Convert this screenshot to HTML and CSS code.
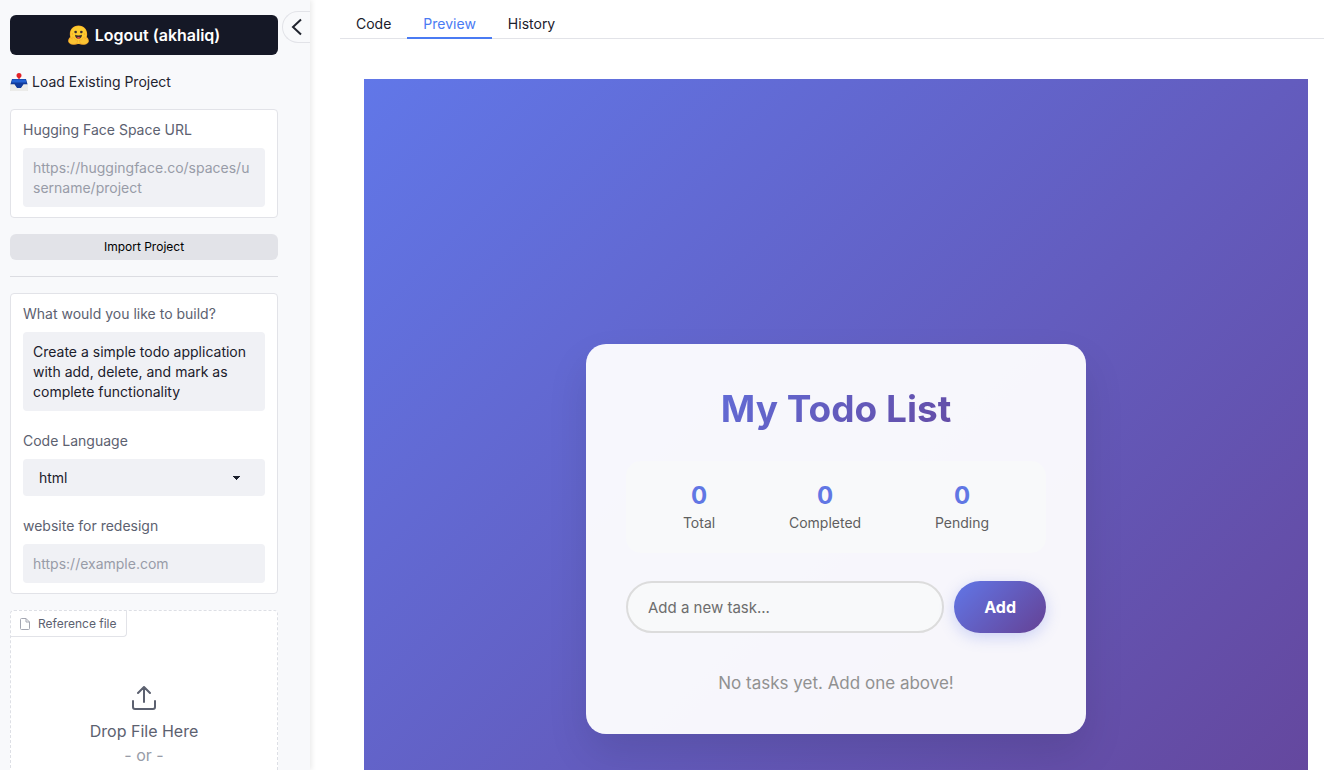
FILE: index.html
```html
<!DOCTYPE html>
<html lang="en">
<head>
<meta charset="utf-8">
<title>Todo builder</title>
<link rel="stylesheet" href="styles.css">
</head>
<body>
<div class="app">
  <aside class="sidebar">
    <button class="collapse" type="button" aria-label="Collapse sidebar">
      <svg width="12" height="18" viewBox="0 0 12 18" fill="none" stroke="currentColor" stroke-width="2"><path d="M10 1.500 2 9l8 7.500"/></svg>
    </button>
    <button class="logout" type="button">
      <svg class="logout-icon" viewBox="0 0 40 38" aria-hidden="true">
        <path fill="#f19a24" d="M20 1C10 1 3.500 8 3.500 17.500c0 2 .3 4 1 5.500C1 25 .5 28 1 31c1 5 7 6 12 6 4 0 5.500-1 7-1s3 1 7 1c5 0 11-1 12-6 .5-3 0-6-3.500-8 .7-1.500 1-3.500 1-5.500C36.500 8 30 1 20 1Z"/>
        <path fill="#fccb2f" d="M20 2C11 2 4.500 8.500 4.500 17.500S9 35.500 20 35.500s15.500-9 15.500-18S29 2 20 2Z"/>
        <path fill="#3a2b2f" d="M12.500 12c1.500-2 4.500-1 4.500 1.300s-2.500 3-4 1.700-1.200-2-.5-3Zm15 0c-1.500-2-4.500-1-4.500 1.300s2.500 3 4 1.700 1.200-2 .5-3ZM13.500 18.500c3.500 2 9.500 2 13 0 .5 4.500-2.500 7.500-6.500 7.500s-7-3-6.500-7.500Z"/>
        <path fill="#ef4e4e" d="M16.500 24.500c2-2.500 5-2.500 7 0-2 2-5 2-7 0Z"/>
        <circle cx="8.500" cy="17" r="1.500" fill="#f8a02c"/><circle cx="31.500" cy="17" r="1.500" fill="#f8a02c"/>
        <path fill="#fcc433" stroke="#f2a02a" stroke-width="1" d="M3 25c2-2 4 1 5 2-1-4 1-6 3-3l4 5c2-2 4 0 3 3-1 4-4 5-8 5-5 0-8-2-9-6 0-2 1-3 2-6Zm34 0c-2-2-4 1-5 2 1-4-1-6-3-3l-4 5c-2-2-4 0-3 3 1 4 4 5 8 5 5 0 8-2 9-6 0-2-1-3-2-6Z"/>
      </svg>
      Logout (akhaliq)
    </button>
    <h2 class="load-title">
      <svg class="tray-icon" viewBox="0 0 36 36" aria-hidden="true">
        <path fill="#d8d8d6" d="M4 13h28l4 10v11a2 2 0 0 1-2 2H2a2 2 0 0 1-2-2V23Z"/>
        <path fill="#123c9c" d="M4 12h28l3 11h-8l-4 7H13l-4-7H1Z"/>
        <path fill="#2463d4" d="M5 13h26l2 6H3Z"/>
        <path fill="#ececea" d="M0 23h9l5 7h8l5-7h9v11a2 2 0 0 1-2 2H2a2 2 0 0 1-2-2Z"/>
        <path fill="#e32227" d="M18 0a5 5 0 0 1 5 5c0 3-2 4-3 5l-2 3-2-3c-1-1-3-2-3-5a5 5 0 0 1 5-5Z"/>
      </svg>
      Load Existing Project
    </h2>
    <div class="panel">
      <div class="field">
        <label for="space-url">Hugging Face Space URL</label>
        <textarea id="space-url" class="control break" rows="2" placeholder="https://huggingface.co/spaces/username/project"></textarea>
      </div>
    </div>
    <button class="import" type="button">Import Project</button>
    <hr class="divider">
    <div class="panel">
      <div class="field">
        <label for="prompt">What would you like to build?</label>
        <textarea id="prompt" class="control" rows="3">Create a simple todo application with add, delete, and mark as complete functionality</textarea>
      </div>
      <div class="field">
        <label for="language">Code Language</label>
        <select id="language" class="control select"><option>html</option></select>
      </div>
      <div class="field">
        <label for="website">website for redesign</label>
        <input id="website" class="control" type="text" placeholder="https://example.com">
      </div>
    </div>
    <div class="upload">
      <div class="upload-label">
        <svg width="10" height="12" viewBox="0 0 10 12" fill="none" stroke="currentColor" stroke-linejoin="round"><path d="M1.500.5H6L9.500 4v6.500a1 1 0 0 1-1 1h-7a1 1 0 0 1-1-1v-9a1 1 0 0 1 1-1ZM6 .5V4h3.500"/></svg>
        Reference file
      </div>
      <button class="drop" type="button">
        <svg width="24" height="24" viewBox="0 0 24 24" fill="none" stroke="currentColor" stroke-width="2" stroke-linecap="round" stroke-linejoin="round"><path d="M1 15v6a2 2 0 0 0 2 2h18a2 2 0 0 0 2-2v-6M12 16V1M6 7l6-6 6 6"/></svg>
        <span class="drop-text">Drop File Here</span>
        <span class="drop-or">- or -</span>
      </button>
    </div>
  </aside>
  <main class="main">
    <div class="tabs" role="tablist">
      <button class="tab" type="button" role="tab" aria-selected="false">Code</button>
      <button class="tab active" type="button" role="tab" aria-selected="true">Preview</button>
      <button class="tab" type="button" role="tab" aria-selected="false">History</button>
    </div>
    <section class="preview">
      <div class="todo">
        <h1 class="title">My Todo List</h1>
        <div class="stats">
          <div class="stat"><span class="number">0</span><span>Total</span></div>
          <div class="stat"><span class="number">0</span><span>Completed</span></div>
          <div class="stat"><span class="number">0</span><span>Pending</span></div>
        </div>
        <form class="add-row">
          <input class="task" type="text" placeholder="Add a new task..." aria-label="New task">
          <button class="add" type="button">Add</button>
        </form>
        <p class="empty">No tasks yet. Add one above!</p>
      </div>
    </section>
  </main>
</div>
</body>
</html>
```
FILE: styles.css
```css
* { box-sizing: border-box; }
body { margin: 0; background: #fff; color: #1f2430; font-family: Inter, "Liberation Sans", sans-serif; font-size: 14px; line-height: 20px; }
button, input, textarea, select { margin: 0; font: inherit; color: inherit; }
button { border: 0; cursor: pointer; }
.app { display: flex; height: 100vh; overflow: hidden; }

.sidebar { position: relative; flex: 0 0 310px; display: flex; flex-direction: column; gap: 16px; padding: 15px 32px 0 10px; background: #f8f9fb; box-shadow: 2px 0 5px rgba(0, 0, 0, .08); }
.sidebar > * { flex-shrink: 0; }
.collapse { position: absolute; top: 11px; right: 0; width: 28px; height: 32px; padding: 0 0 0 8px; display: flex; align-items: center; border: 1px solid #e2e3e8; border-right: 0; border-radius: 16px 0 0 16px; background: #f8f9fb; color: #20242e; }
.logout { display: flex; align-items: center; justify-content: center; gap: 6px; height: 40px; border-radius: 6px; background: #151826; color: #fff; font-size: 16px; font-weight: 600; }
.logout-icon { width: 21px; height: 20px; }
.load-title { display: flex; align-items: center; gap: 4px; margin: 1px 0; font-size: 14px; font-weight: 400; }
.tray-icon { width: 18px; height: 18px; }
.panel { display: flex; flex-direction: column; gap: 20px; padding: 10px 12px; border: 1px solid #e2e3e8; border-radius: 4px; background: #fff; }
.field { display: flex; flex-direction: column; gap: 8px; color: #5c6170; }
.control { display: block; width: 100%; padding: 10px 10px 9px; border: 0; border-radius: 4px; background: #f0f1f5; color: #1b202c; resize: none; overflow: hidden; outline: 0; }
.control::placeholder { color: #989ca8; opacity: 1; }
.break { word-break: break-all; }
.select { height: 37px; padding: 0 16px; appearance: none; background-image: linear-gradient(to bottom left, #1b202c 50%, transparent 50%), linear-gradient(to bottom right, #1b202c 50%, transparent 50%); background-repeat: no-repeat; background-position: right 28px center, right 24px center; background-size: 4px 4px; }
.import { height: 26px; border-radius: 6px; background: #e2e3e8; color: #000; font-size: 12px; }
.divider { width: 100%; height: 1px; margin: 0; border: 0; background: #dcdde2; }
.upload { min-height: 240px; border: 1px dashed #dddfe5; border-radius: 4px; background: #fff; color: #5c6170; }
.upload-label { display: flex; align-items: center; gap: 8px; width: fit-content; height: 26px; padding: 0 9px; border: solid #e2e3e8; border-width: 0 1px 1px 0; border-radius: 0 0 4px; font-size: 12px; }
.upload-label svg { color: #a4a7b2; }
.drop { display: flex; flex-direction: column; align-items: center; width: 100%; padding: 49px 0 0; background: transparent; font-size: 16px; line-height: 24px; }
.drop-text { margin-top: 9px; }
.drop-or { color: #989ca8; }

.main { flex: 1; min-width: 0; padding: 9px 0 0 30px; }
.tabs { display: flex; border-bottom: 1px solid #e2e3e8; }
.tab { height: 30px; margin-bottom: -1px; padding: 2px 16px 0; border-bottom: 2px solid transparent; background: transparent; color: #1b202c; }
.active { border-color: #4a7bf3; color: #4a7bf3; }
.preview { display: flex; align-items: center; justify-content: center; min-height: 920px; margin: 40px 16px 0 24px; background: linear-gradient(135deg, #6177e8, #654194); }
.todo { flex: 0 1 500px; padding: 40px; border-radius: 20px; background: rgba(255, 255, 255, .95); box-shadow: 0 20px 40px rgba(0, 0, 0, .1); text-align: center; }
.title { margin: 0 0 28px; background: linear-gradient(135deg, #6177e8, #654194); background-clip: text; -webkit-background-clip: text; color: transparent; font-size: 37px; line-height: 49px; font-weight: 700; }
.stats { display: flex; justify-content: space-around; margin-bottom: 28px; padding: 20px; border-radius: 15px; background: #f8f9fa; color: #5f5f5f; }
.stat { display: flex; flex-direction: column; gap: 3px; }
.number { color: #6177e4; font-size: 24px; line-height: 29px; font-weight: 700; }
.add-row { display: flex; gap: 10px; margin: 0 0 40px; }
.task { flex: 1; min-width: 0; height: 52px; padding: 0 20px; border: 2px solid #dcdcdc; border-radius: 26px; background: #f8f9fa; font-size: 15px; outline: 0; }
.task::placeholder { color: #6d6d6d; opacity: 1; }
.add { padding: 0 30px; border-radius: 26px; background: linear-gradient(135deg, #6177e8, #654194); box-shadow: 0 4px 15px rgba(102, 126, 234, .3); color: #fff; font-size: 16px; font-weight: 700; }
.empty { margin: 0; color: #919191; font-size: 17px; line-height: 21px; }
```
